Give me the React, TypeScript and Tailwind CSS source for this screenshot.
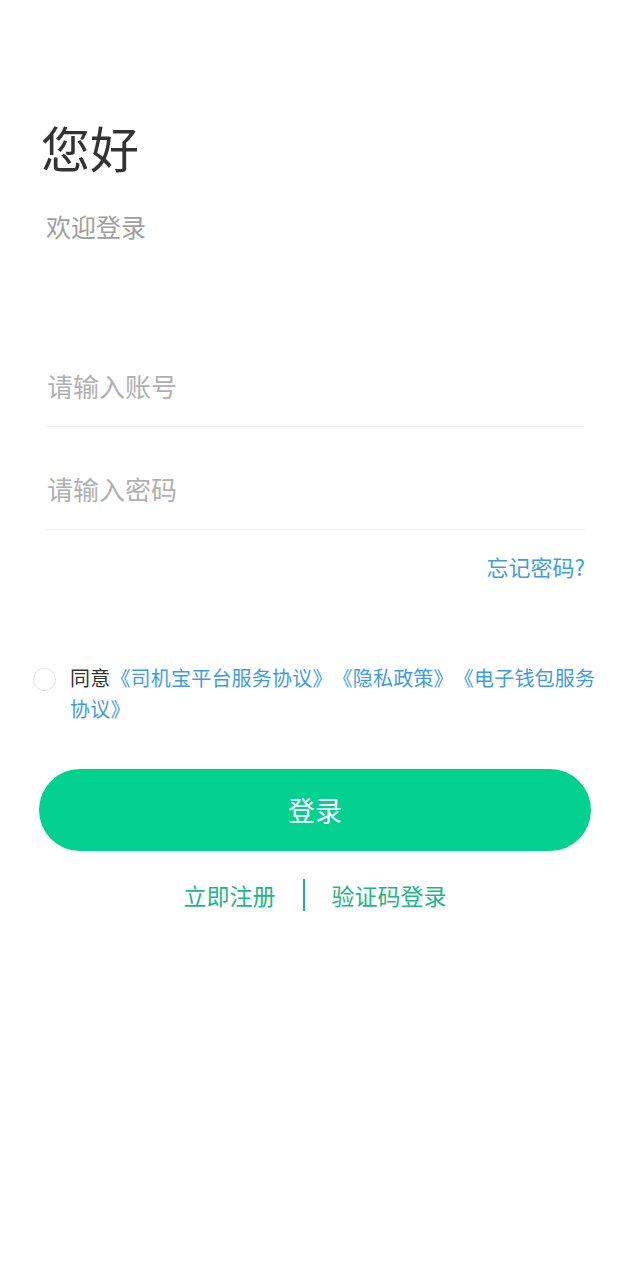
import React from "react";

export default function App() {
  return (
    <div
      className="w-[630px] min-h-[1280px] bg-white flex flex-col [text-spacing-trim:space-all]"
      style={{ fontFamily: '"Noto Sans CJK SC", "Noto Sans", sans-serif' }}
    >
      <div className="pl-[41px] pt-[123px]">
        <div className="text-[49px] leading-[48px] text-[#333333]">您好</div>
        <div className="mt-[43px] pl-[5px] text-[25px] leading-[24px] text-[#9e9e9e]">欢迎登录</div>
      </div>

      <div className="mt-[106px] px-[45px] flex flex-col gap-[20px]">
        <div className="h-[83px] flex items-center border-b border-[#f1f1f1]">
          <input
            className="w-full pl-[2px] text-[26px] leading-[26px] outline-none placeholder:text-[#b0b0b0] text-[#333]"
            placeholder="请输入账号"
          />
        </div>
        <div className="h-[83px] flex items-center border-b border-[#f1f1f1]">
          <input
            type="password"
            className="w-full pl-[2px] text-[26px] leading-[26px] outline-none placeholder:text-[#b0b0b0] text-[#333]"
            placeholder="请输入密码"
          />
        </div>
      </div>

      <div className="mt-[25px] px-[45px] flex justify-end">
        <span className="text-[22px] leading-[22px] text-[#3f9ddf]">忘记密码?</span>
      </div>

      <div className="mt-[85px] pl-[33px] pr-[28px] flex items-start gap-[14px]">
        <div className="mt-[6px] shrink-0 w-[23px] h-[23px] rounded-full border border-[#e2e2e2] bg-white" />
        <p className="text-[20px] leading-[31px] tracking-[0.2px] text-[#333333] [text-spacing-trim:space-all]">
          同意<span className="text-[#3f9ddf]">《司机宝平台服务协议》《隐私政策》《电子钱包服务协议》</span>
        </p>
      </div>

      <div className="mt-[45px] px-[39px]">
        <button className="w-full h-[82px] rounded-full bg-[#02d18f] text-white text-[27px] leading-[26px]">
          登录
        </button>
      </div>

      <div className="mt-[28px] flex justify-center items-center gap-[27px] text-[23px] leading-[23px] text-[#1db787]">
        <span>立即注册</span>
        <div className="w-[2px] h-[32px] bg-[#1db787]" />
        <span>验证码登录</span>
      </div>
    </div>
  );
}
